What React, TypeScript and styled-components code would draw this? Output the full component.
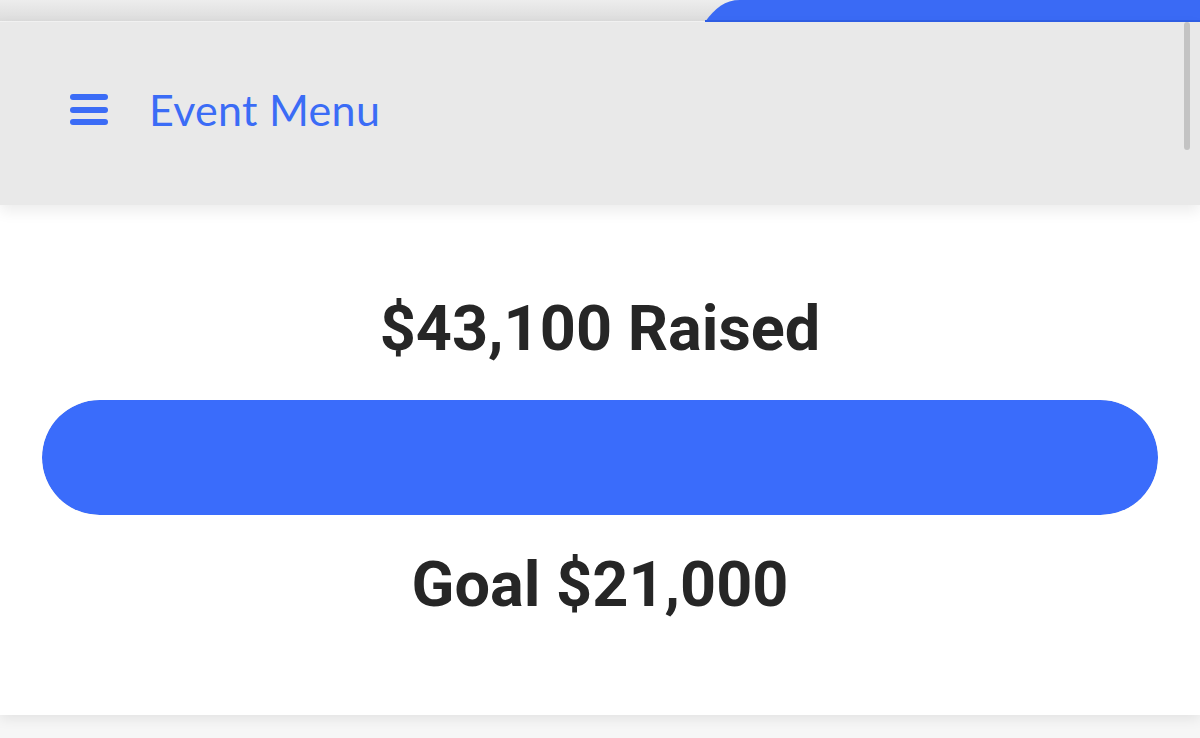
import { FunctionComponent } from 'react'
import styled, { createGlobalStyle } from 'styled-components'

const GlobalStyle = createGlobalStyle`
    html, body {
        margin: 0;
        padding: 0;
        background: #f6f6f6;
        overflow: hidden;
    }
    * {
        box-sizing: border-box;
    }
`

const Page = styled.div`
    position: relative;
    display: flex;
    flex-direction: column;
    width: 1200px;
    height: 738px;
    background: #f6f6f6;
    font-family: Roboto, 'Liberation Sans', sans-serif;
`

const TopStrip = styled.div`
    display: flex;
    height: 22px;
    background: linear-gradient(180deg, #ededed 0%, #dcdcdc 100%);
    border-bottom: 1px solid #f4f4f4;
`

const Wave = styled.svg`
    display: block;
    width: 1200px;
    height: 22px;
`

const Header = styled.header`
    position: relative;
    z-index: 2;
    display: flex;
    align-items: center;
    gap: 41px;
    height: 183px;
    padding: 0 0 8px 70px;
    background: #e9e9e9;
    box-shadow: 0 6px 14px rgba(0, 0, 0, 0.08);
`

const Burger = styled.div`
    display: flex;
    flex-direction: column;
    gap: 6.5px;
    width: 38px;
`

const BurgerBar = styled.span`
    display: block;
    height: 6px;
    border-radius: 3px;
    background: #3b6cf6;
`

const MenuLabel = styled.div`
    font-family: Lato, 'Noto Sans', sans-serif;
    font-weight: 400;
    font-size: 43px;
    letter-spacing: 0.3px;
    color: #3b6cf6;
`

const ScrollThumb = styled.div`
    position: absolute;
    top: 22px;
    right: 10px;
    width: 6px;
    height: 128px;
    border-radius: 3px;
    background: rgba(0, 0, 0, 0.16);
    z-index: 3;
`

const Card = styled.section`
    display: flex;
    flex-direction: column;
    align-items: center;
    height: 510px;
    padding: 92px 42px 0;
    background: #ffffff;
    box-shadow: 0 4px 12px rgba(0, 0, 0, 0.08);
`

const Amount = styled.div<{ gap: number }>`
    font-weight: 700;
    font-size: 63px;
    line-height: 1;
    color: #262626;
    margin-bottom: ${({ gap }) => gap}px;
`

const Track = styled.div`
    width: 100%;
    height: 115px;
    border-radius: 58px;
    background: #e6e6e6;
    overflow: hidden;
    margin-bottom: 38px;
`

const Fill = styled.div`
    height: 100%;
    border-radius: 58px;
    background: #3a6cfb;
`

const raised = 43100
const goal = 21000

const App: FunctionComponent = () => {
    const pct = Math.min(100, (raised / goal) * 100)
    return (
        <Page>
            <GlobalStyle />
            <TopStrip>
                <Wave viewBox="0 0 1200 22" preserveAspectRatio="none">
                    <path d="M705 22 C 715 8, 725 0, 740 0 L 1200 0 L 1200 22 Z" fill="#3a6af5" />
                    <rect x="705" y="20" width="495" height="2" fill="#2f5fe6" />
                </Wave>
            </TopStrip>
            <Header>
                <Burger>
                    <BurgerBar />
                    <BurgerBar />
                    <BurgerBar />
                </Burger>
                <MenuLabel>Event Menu</MenuLabel>
            </Header>
            <ScrollThumb />
            <Card>
                <Amount gap={40}>${raised.toLocaleString('en-US')} Raised</Amount>
                <Track>
                    <Fill style={{ width: `${pct}%` }} />
                </Track>
                <Amount gap={0}>Goal ${goal.toLocaleString('en-US')}</Amount>
            </Card>
        </Page>
    )
}

export default App
